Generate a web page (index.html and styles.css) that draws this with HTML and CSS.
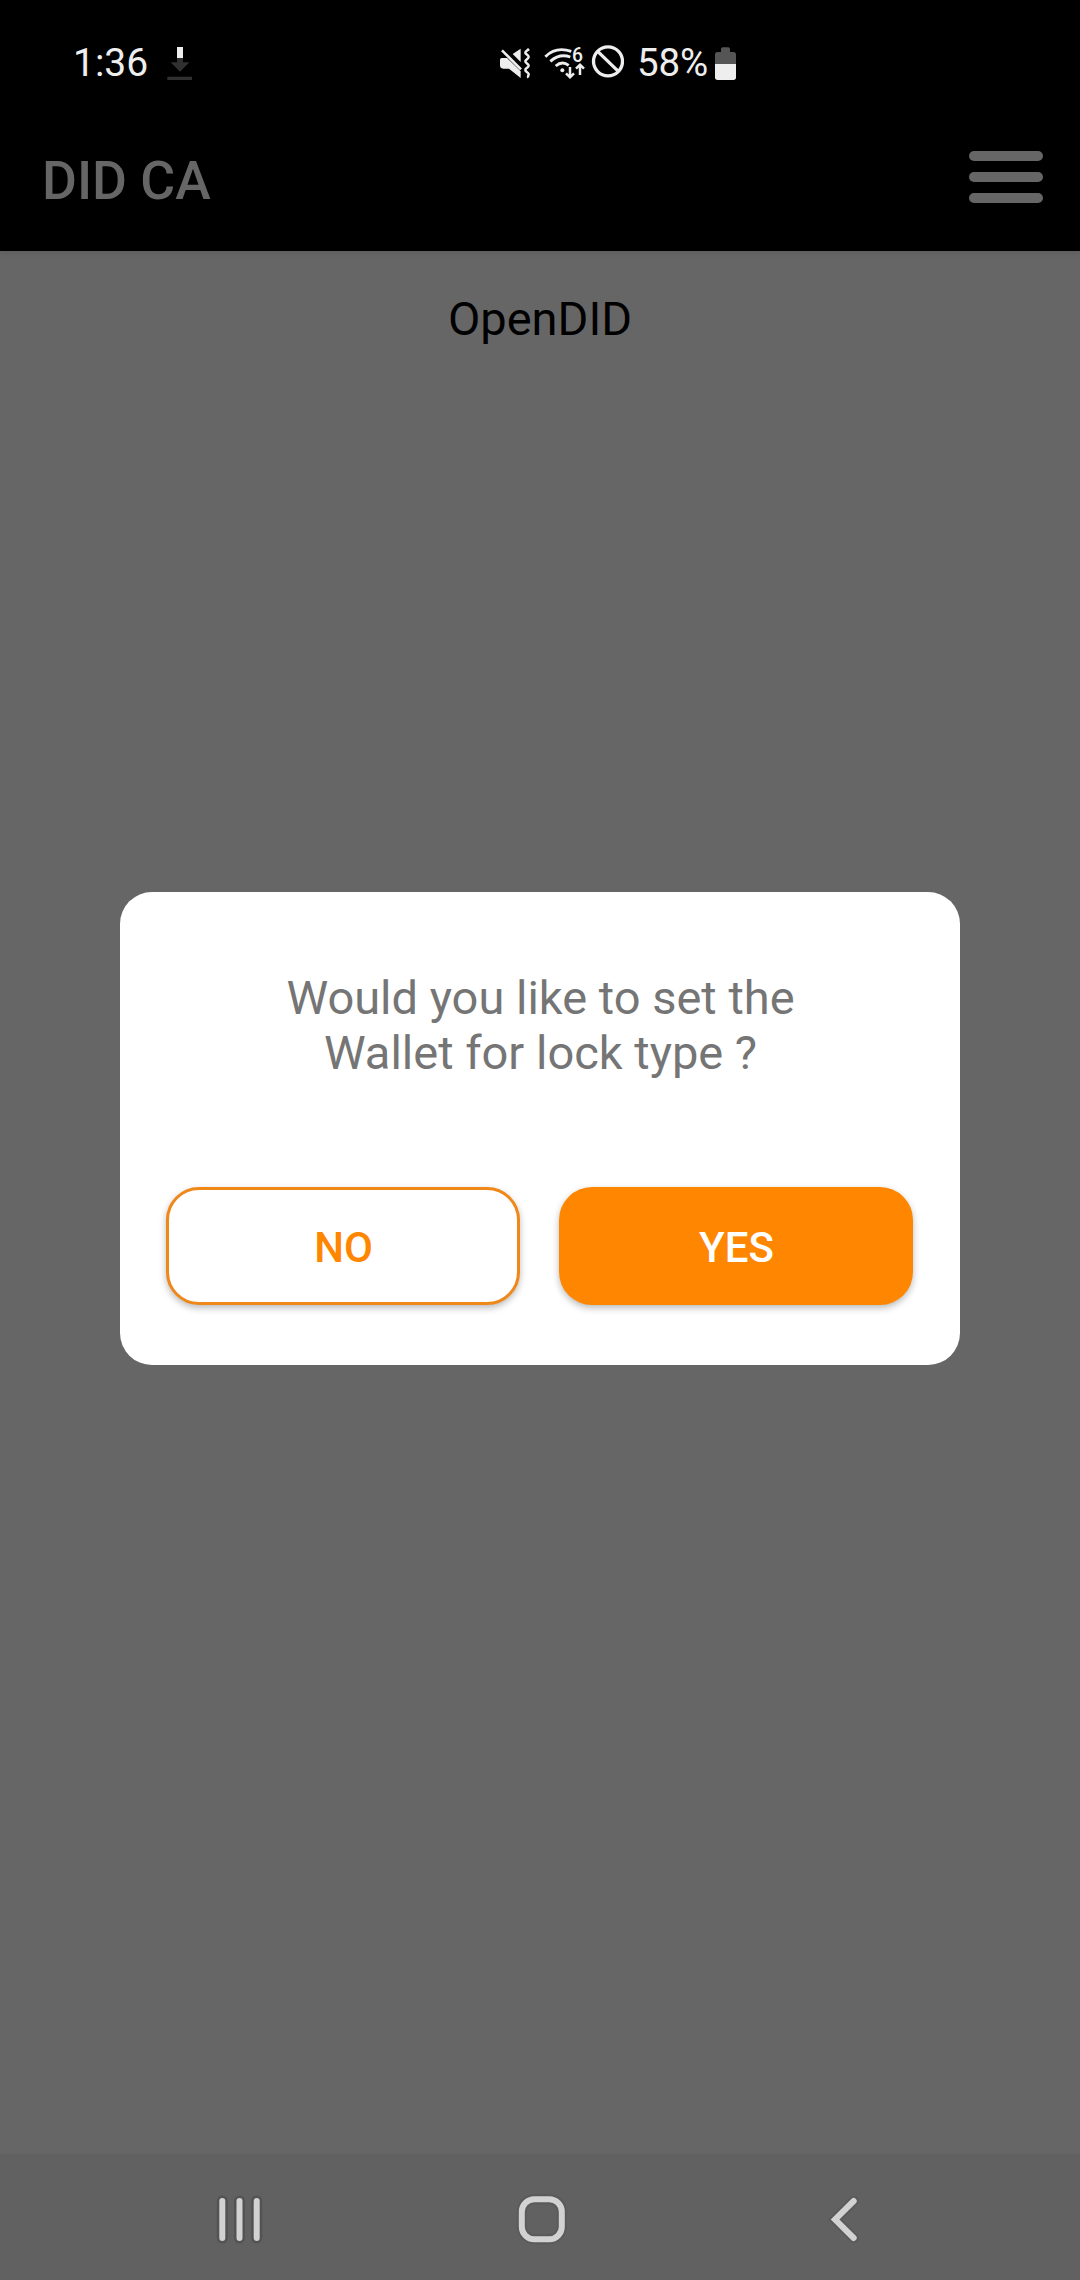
FILE: index.html
```html
<!DOCTYPE html>
<html lang="en">
<head>
<meta charset="utf-8">
<title>DID CA</title>
<link rel="stylesheet" href="styles.css">
</head>
<body>
<div class="screen">
  <header class="top">
    <div class="status">
      <span class="time">1:36</span>
      <svg class="download" width="28" height="42" viewBox="348 36 84 126">
        <path fill="#303030" d="M381 84h18v13h19l-28 28-28-28h19zM352 140h74v10h-74z"/>
        <path fill="#eee" d="M381 51h18v33h-18z"/>
      </svg>
      <div class="indicators">
        <svg class="mute" width="34" height="42" viewBox="54 36 102 126">
          <path fill="#eee" d="M60 89q0-5 5-5h16l41 40v20l-35-28H70q-10 0-10-10zM98 72l24-16v40z"/>
          <path fill="none" stroke="#eee" stroke-width="8" d="M66 61l57 57"/>
          <path fill="none" stroke="#eee" stroke-width="7.5" d="M147 57c-5 5-11 6-11 11s10 7 10 13-10 7-10 13 10 7 10 13-10 7-10 13 10 7 10 12-4 7-1 11"/>
        </svg>
        <svg class="wifi" width="44" height="42" viewBox="189 36 132 126">
          <g fill="none" stroke="#eee" stroke-width="8.5">
            <path d="M196 80c20-20 48-26 78-16M211 94c18-16 38-21 60-13M227 108c12-10 27-11 39-2"/>
            <path stroke-width="7.5" d="M270 111v29M258 130l12 12 12-12M300 135v-29M288 116l12-12 12 12"/>
          </g>
          <circle cx="247" cy="121" r="6" fill="#eee"/>
          <text class="gen" x="276" y="95">6</text>
        </svg>
        <svg class="ban" width="34" height="42" viewBox="330 36 102 126">
          <g fill="none" stroke="#eee" stroke-width="10"><circle cx="384" cy="94" r="43.5"/><path d="M353 64l62 60"/></g>
        </svg>
        <span class="percent">58%</span>
        <svg class="battery" width="25" height="42" viewBox="339 36 75 126">
          <path fill="#555" d="M345 102V74q0-8 8-8h10V57q0-5 5-5h17q5 0 5 5v9h10q8 0 8 8v28z"/>
          <path fill="#eee" d="M345 102h63v40q0 8-8 8h-47q-8 0-8-8z"/>
        </svg>
      </div>
    </div>
    <div class="appbar">
      <h1 class="title">DID CA</h1>
      <div class="menu"><i class="bar"></i><i class="bar"></i><i class="bar"></i></div>
    </div>
  </header>
  <main class="content">
    <p class="heading">OpenDID</p>
    <section class="dialog">
      <p class="message">Would you like to set the<br>Wallet for lock type ?</p>
      <div class="actions">
        <button class="btn outline">NO</button>
        <button class="btn filled">YES</button>
      </div>
    </section>
  </main>
  <nav class="nav">
    <svg width="48" height="56" viewBox="0 0 48 56">
      <path class="halo" d="M6.3 10v37M23.5 10v37M40.7 10v37"/>
      <path class="line" d="M6.3 10v37M23.5 10v37M40.7 10v37"/>
    </svg>
    <svg width="56" height="56" viewBox="0 0 56 56">
      <rect class="halo soft" x="7.8" y="8.2" width="40" height="40" rx="12.5"/>
      <rect class="line" x="7.8" y="8.2" width="40" height="40" rx="12.5"/>
    </svg>
    <svg width="44" height="56" viewBox="0 0 44 56">
      <path class="halo soft" d="M33.7 10L15 28.5l18.7 18.5"/>
      <path class="line" d="M33.7 10L15 28.5l18.7 18.5"/>
    </svg>
  </nav>
</div>
</body>
</html>
```
FILE: styles.css
```css
* { box-sizing: border-box; margin: 0; padding: 0; }
body { background: #666; font-family: Roboto, "Liberation Sans", sans-serif; }
svg { display: block; flex: none; }
.screen { width: 1080px; height: 2280px; display: flex; flex-direction: column; background: #666; overflow: hidden; }
.top { height: 251px; background: #000; box-shadow: 0 1px 6px rgba(0, 0, 0, .12); }
.status { display: flex; padding: 42px 0 0 73px; height: 121px; color: #eee; font-size: 39px; line-height: 42px; }
.time { width: 93px; }
.indicators { display: flex; margin-left: 304px; }
.wifi { margin-left: 11px; }
.ban { margin-left: 3px; }
.percent { width: 76px; margin-left: 13px; font-size: 38.5px; letter-spacing: -.1px; white-space: nowrap; }
.gen { font: 500 58px Roboto, sans-serif; fill: #eee; }
.appbar { display: flex; justify-content: space-between; height: 130px; padding: 27px 37px 0 42px; }
.title { padding-top: 1px; font-size: 53.5px; line-height: 63px; font-weight: 500; color: #666; }
.menu { display: flex; flex-direction: column; gap: 11px; width: 74px; padding-top: 3px; }
.bar { height: 10px; border-radius: 5px; background: #666; }
.content { flex: 1; display: flex; flex-direction: column; align-items: center; padding-top: 40px; }
.heading { font-size: 47px; line-height: 55px; color: #000; }
.dialog { width: 840px; height: 473px; margin-top: 546px; padding: 78px 46px 0; border-radius: 32px; background: #fff; }
.message { padding-left: 1px; font-size: 47px; line-height: 55px; color: #757575; text-align: center; }
.actions { display: flex; gap: 39px; margin-top: 107px; }
.btn { width: 354px; height: 118px; padding: 3px 0 0 1px; border: 0; border-radius: 33px; font: 500 42px Roboto, sans-serif; box-shadow: 0 3px 7px rgba(0, 0, 0, .27); }
.outline { border: 3px solid #f08719; background: #fff; color: #ff8600; }
.filled { background: #ff8600; color: #fff; }
.nav { display: flex; gap: 250px; height: 126px; padding: 37px 0 0 216px; background: #616161; }
.line, .halo { fill: none; stroke-linecap: round; }
.line { stroke: #d2d2d2; stroke-width: 6; }
.halo { stroke: #535353; stroke-width: 11; }
.soft { stroke: #5a5a5a; stroke-width: 10; }
```
